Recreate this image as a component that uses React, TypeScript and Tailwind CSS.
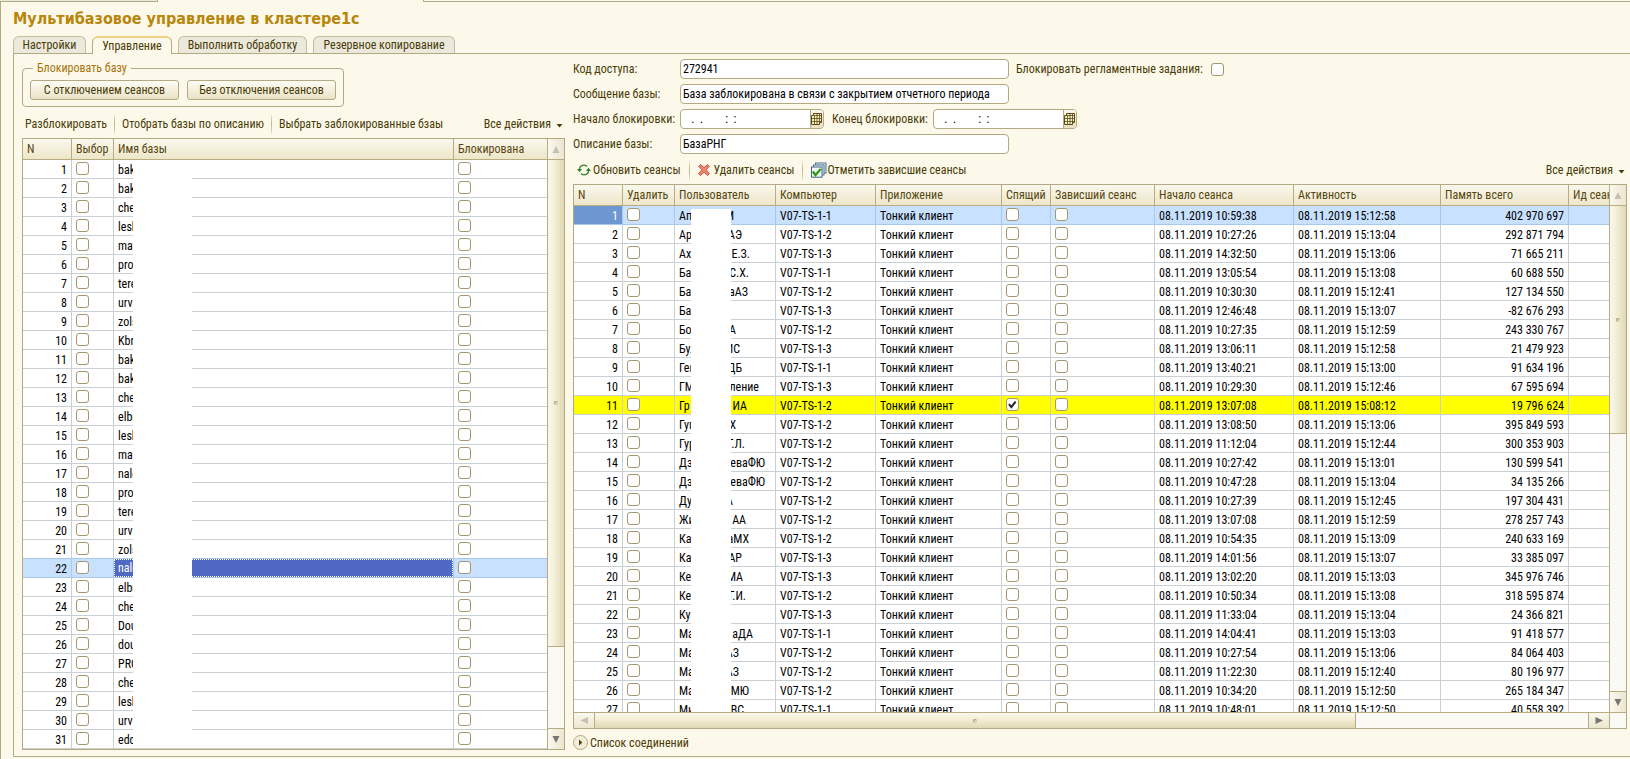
import type { ReactNode } from "react";

type CheckProps = { label: string; checked?: boolean; id?: string };

function Check({ label, checked = false, id }: CheckProps) {
  return (
    <span className="relative block size-[13px]">
      <input
        id={id}
        type="checkbox"
        aria-label={id ? undefined : label}
        defaultChecked={checked}
        className="peer block size-[13px] appearance-none rounded-[3px] border border-[#a3976f] bg-white"
      />
      <svg
        viewBox="0 0 13 13"
        className="pointer-events-none absolute inset-0 hidden size-[13px] peer-checked:block"
        aria-hidden="true"
      >
        <path d="M3 6.2 L5.3 9.2 L9.6 3.6" fill="none" stroke="#222" strokeWidth="2" />
      </svg>
    </span>
  );
}

const databases = [
  "bak", "bak", "che", "lesk", "may", "prob", "tere", "urv", "zols", "Kbr",
  "bak", "bak", "che", "elbr", "lesk", "may", "nalc", "prob", "tere", "urv",
  "zols", "nalc", "elbr", "che", "Dou", "dou", "PRO", "che", "lesk", "urv", "edc",
];

type Session = {
  head: string;
  tail: string;
  end: number;
  pc: number;
  start: string;
  active: string;
  memory: string;
};

const s = (
  head: string, tail: string, end: number, pc: number, start: string, active: string, memory: string,
): Session => ({ head, tail, end, pc, start, active, memory });

const sessions: Session[] = [
  s("Апп", "М", 55, 1, "10:59:38", "15:12:58", "402 970 697"),
  s("Ар", "АЭ", 63, 2, "10:27:26", "15:13:04", "292 871 794"),
  s("Ахм", "Е.З.", 71, 3, "14:32:50", "15:13:06", "71 665 211"),
  s("Ба", "С.Х.", 70, 1, "13:05:54", "15:13:08", "60 688 550"),
  s("Ба", "аАЗ", 69, 2, "10:30:30", "15:12:41", "127 134 550"),
  s("Ба", "", 50, 3, "12:46:48", "15:13:07", "-82 676 293"),
  s("Бо", "А", 57, 2, "10:27:35", "15:12:59", "243 330 767"),
  s("Бул", "ИС", 61, 3, "13:06:11", "15:12:58", "21 479 923"),
  s("Ген", "ДБ", 63, 1, "13:40:21", "15:13:00", "91 634 196"),
  s("ГМ", "ление", 80, 3, "10:29:30", "15:12:46", "67 595 694"),
  s("Гр", "ИА", 68, 2, "13:07:08", "15:08:12", "19 796 624"),
  s("Гуп", "Х", 57, 2, "13:08:50", "15:13:06", "395 849 593"),
  s("Гур", "Г.Л.", 66, 2, "11:12:04", "15:12:44", "300 353 903"),
  s("Дзе", "еваФЮ", 86, 2, "10:27:42", "15:13:01", "130 599 541"),
  s("Дзе", "еваФЮ", 86, 2, "10:47:28", "15:13:04", "34 135 266"),
  s("Ду", "А", 54, 2, "10:27:39", "15:12:45", "197 304 431"),
  s("Жи", "АА", 67, 2, "13:07:08", "15:12:59", "278 257 743"),
  s("Ка", "аМХ", 70, 2, "10:54:35", "15:13:09", "240 633 169"),
  s("Ка", "АР", 63, 3, "14:01:56", "15:13:07", "33 385 097"),
  s("Ке", "МА", 64, 3, "13:02:20", "15:13:03", "345 976 746"),
  s("Ке", "Г.И.", 67, 2, "10:50:34", "15:13:08", "318 595 874"),
  s("Куш", "", 50, 3, "11:33:04", "15:13:04", "24 366 821"),
  s("Ма", "аДА", 74, 1, "14:04:41", "15:13:03", "91 418 577"),
  s("Ма", "АЗ", 60, 2, "10:27:54", "15:13:06", "84 064 403"),
  s("Ма", "АЗ", 60, 2, "11:22:30", "15:12:40", "80 196 977"),
  s("Ма", "МЮ", 70, 2, "10:34:20", "15:12:50", "265 184 347"),
  s("Ми", "ВС", 65, 1, "10:48:01", "15:12:50", "40 558 392"),
];

function Th({ children }: { children: ReactNode }) {
  return (
    <th
      scope="col"
      className="h-[21px] overflow-hidden border-r border-b border-[#b8ad82] bg-linear-to-b from-[#faf8ee] to-[#ede6c9] px-1 text-left font-normal whitespace-nowrap text-[#57460f] last:border-r-0"
    >
      {children}
    </th>
  );
}

const baseCell = "h-[19px] overflow-hidden border-r border-b px-1 whitespace-nowrap last:border-r-0";
const cell = `${baseCell} pt-[2px] leading-[16px]`;
const checkCell = `${baseCell} pt-[2px] align-top`;

function Tri({ dir, dim = false }: { dir: "up" | "down" | "left" | "right"; dim?: boolean }) {
  const d = {
    up: "M4 1 L7.5 8 H0.5 Z",
    down: "M4 8 L7.5 1 H0.5 Z",
    left: "M0.5 4.5 L8 1 V8 Z",
    right: "M8 4.5 L0.5 1 V8 Z",
  }[dir];
  return (
    <svg viewBox="0 0 9 9" className="size-[9px]" aria-hidden="true">
      <path d={d} fill={dim ? "#c4c1b4" : "#77756f"} />
    </svg>
  );
}

const grip = <span className="block size-[4px] rounded-full border-t border-l border-[#aba684] bg-[#d9d3b4]" />;

function VScroll({ thumb, foot }: { thumb: string; foot: string }) {
  return (
    <div className="flex w-[17px] shrink-0 flex-col border-l border-[#b8ad82] bg-[#faf9f4]">
      <button
        type="button"
        aria-label="Вверх"
        className="flex h-[21px] shrink-0 items-center justify-center border-b border-[#b8ad82] bg-linear-to-r from-[#faf8ee] to-[#ece6cf]"
      >
        <Tri dir="up" dim />
      </button>
      <div className={`flex items-center justify-center border-b border-[#b8ad82] bg-linear-to-r from-[#faf8ee] via-[#f1ecd0] to-[#e0d8b4] ${thumb}`}>
        {grip}
      </div>
      <div className="grow" />
      <button
        type="button"
        aria-label="Вниз"
        className={`flex shrink-0 items-center justify-center border-t border-[#b8ad82] bg-linear-to-r from-[#faf8ee] to-[#ece6cf] ${foot}`}
      >
        <Tri dir="down" />
      </button>
    </div>
  );
}

function Sep() {
  return <span className="h-[19px] w-px shrink-0 bg-linear-to-b from-[#e8e2c8] via-[#bdb48d] to-[#e8e2c8]" />;
}

function AllActions() {
  return (
    <button type="button" className="ml-auto flex items-center gap-[5px]">
      Все действия
      <svg viewBox="0 0 7 4" className="mt-[3px] h-[4px] w-[7px]" aria-hidden="true">
        <path d="M0.5 0 H6.5 L3.5 3.5 Z" fill="#4a3b08" />
      </svg>
    </button>
  );
}

function RefreshIcon() {
  return (
    <svg viewBox="0 0 14 14" className="h-[14px] w-[14px]" aria-hidden="true">
      <path d="M2.4 6.4 C2.6 3.6 5 2.3 7 2.3 C8.2 2.3 9.2 2.7 10 3.4" fill="none" stroke="#4f8f3c" strokeWidth="1.5" />
      <path d="M0 6 H5 L2.5 9.2 Z" fill="#2f7d22" />
      <path d="M11.6 7.6 C11.4 10.4 9 11.7 7 11.7 C5.8 11.7 4.8 11.3 4 10.6" fill="none" stroke="#4f8f3c" strokeWidth="1.5" />
      <path d="M14 8 H9 L11.5 4.8 Z" fill="#2f7d22" />
    </svg>
  );
}

function DeleteIcon() {
  return (
    <svg viewBox="0 0 12 12" className="size-[12px]" aria-hidden="true">
      <path
        d="M0.7 2.2 L2.6 0.6 L6 3.6 L9.6 0.6 L11.3 2.2 L8.2 5.8 L11.4 9.8 L9.4 11.5 L6 8 L2.5 11.5 L0.6 9.8 L3.9 5.8 Z"
        fill="#ee8672"
        stroke="#cf4736"
        strokeWidth="0.9"
      />
    </svg>
  );
}

function MarkIcon() {
  return (
    <svg viewBox="0 0 16 16" className="size-[16px]" aria-hidden="true">
      <rect x="4.5" y="1" width="10.5" height="10" fill="#dbe9f2" stroke="#52758f" />
      <rect x="2.5" y="3" width="10.5" height="10" fill="#e6f0f6" stroke="#52758f" />
      <rect x="0.5" y="5" width="10.5" height="10.2" fill="#f3f8fb" stroke="#3e6581" />
      <path d="M1.8 9.6 L4.4 13 L9.8 7" fill="none" stroke="#2f9a1d" strokeWidth="2.4" />
    </svg>
  );
}

const fieldBox = "h-[20px] rounded-[4px] border border-[#b3a982] bg-white text-black";

function TextField({ id, label, value }: { id: string; label: string; value: string }) {
  return (
    <>
      <label htmlFor={id} className="w-[107px] shrink-0">{label}</label>
      <input id={id} defaultValue={value} className={`${fieldBox} w-[329px] px-[2px]`} />
    </>
  );
}

function DateField({ id }: { id: string }) {
  return (
    <span className={`flex w-[144px] overflow-hidden ${fieldBox}`}>
      <input id={id} defaultValue={"   .  .        :  :"} className="min-w-0 grow px-[2px]" />
      <button
        type="button"
        aria-label="Календарь"
        className="flex w-[16px] items-center justify-center border-l border-[#b3a982] bg-linear-to-b from-[#faf8ee] to-[#e6dfc0]"
      >
        <svg viewBox="0 0 11 12" className="h-[12px] w-[11px]" aria-hidden="true">
          <path d="M2.5 0.5 H10.5 V9.5 H8.5 V11.5 H0.5 V2.5 H2.5 Z" fill="#f6efcd" stroke="#5c4a10" />
          <path d="M0.5 5.5 H10.5 M0.5 8.5 H10.5 M2.5 2.5 H10.5 M3.5 2.5 V11.5 M6 0.5 V11.5 M8.5 0.5 V11.5" stroke="#5c4a10" strokeWidth="0.8" fill="none" />
        </svg>
      </button>
    </span>
  );
}

const tab = "h-[17px] rounded-t-[6px] border border-b-0 border-[#c5bd9e] bg-[#ebe9db] px-[7px] leading-[17px] whitespace-nowrap";

const groupButton =
  "h-[20px] w-[149px] rounded-[3px] border border-[#b3a982] bg-linear-to-b from-[#fdfcf4] to-[#e9e3c6] leading-[18px] text-[#4a3b08]";

export default function App() {
  return (
    <div className="flex min-h-screen flex-col overflow-hidden bg-[#fcf9ea] font-['Roboto_Condensed','Liberation_Sans',sans-serif] text-[12px] leading-[14px] text-[#4a3b08]">
      <div className="flex h-[2px] shrink-0 justify-between">
        <div className="w-[158px] border-r border-b border-[#b3a982] bg-[#ebe9db]" />
        <div className="ml-[265px] grow border-b border-l border-[#b3a982]" />
      </div>
      <main className="flex grow flex-col border-l border-[#b3a982] pb-[2px] pl-3">
        <h1 className="h-[34px] font-['DejaVu_Sans_Condensed','DejaVu_Sans',sans-serif] text-[16px] leading-[33px] font-bold text-[#b8860b]">
          Мультибазовое управление в кластере1с
        </h1>
        <div role="tablist" className="flex shrink-0 items-end gap-[6px]">
          <button type="button" role="tab" aria-selected="false" className={`w-[73px] ${tab}`}>Настройки</button>
          <button
            type="button"
            role="tab"
            aria-selected="true"
            className="relative z-10 -mb-px h-[18px] w-[80px] rounded-t-[6px] border border-t-2 border-b-0 border-[#b3a982] border-t-[#f0cf86] bg-[#fcf9ea] leading-[16px]"
          >
            Управление
          </button>
          <button type="button" role="tab" aria-selected="false" className={`w-[129px] ${tab}`}>Выполнить обработку</button>
          <button type="button" role="tab" aria-selected="false" className={`w-[142px] ${tab}`}>Резервное копирование</button>
        </div>

        <div className="grid grow grid-cols-[543px_minmax(0,1fr)] gap-2 border border-r-0 border-[#b3a982] pr-[3px] pb-[6px] pl-2">
          <section className="flex flex-col">
            <fieldset className="mt-[7px] flex w-[321px] gap-2 rounded-[4px] border border-[#b3a982] px-[7px] pt-[5px] pb-[6px]">
              <legend className="ml-[3px] px-1 text-[#a8720c]">Блокировать базу</legend>
              <button type="button" className={groupButton}>С отключением сеансов</button>
              <button type="button" className={groupButton}>Без отключения сеансов</button>
            </fieldset>
            <div className="flex h-[31px] items-center gap-[7px] pt-[3px] pr-[2px] pl-[3px]">
              <button type="button">Разблокировать</button>
              <Sep />
              <button type="button">Отобрать базы по описанию</button>
              <Sep />
              <button type="button">Выбрать заблокированные бзаы</button>
              <AllActions />
            </div>
            <div className="flex border border-[#b3a982] bg-white">
              <div className="relative min-w-0 grow">
                <table className="w-full table-fixed border-separate border-spacing-0">
                  <colgroup>
                    <col className="w-[49px]" />
                    <col className="w-[42px]" />
                    <col />
                    <col className="w-[93px]" />
                  </colgroup>
                  <thead>
                    <tr>
                      <Th>N</Th>
                      <Th>Выбор</Th>
                      <Th>Имя базы</Th>
                      <Th>Блокирована</Th>
                    </tr>
                  </thead>
                  <tbody className="text-black">
                    {databases.map((name, i) => {
                      const on = i === 21;
                      const line = on || i === 20 ? "border-b-[#a9c8ec]" : "border-b-[#c8d0d4]";
                      const tone = `${line} ${on ? "border-r-[#a9c8ec] bg-[#c8e1ff]" : "border-r-[#c8d0d4]"}`;
                      return (
                        <tr key={i}>
                          <td className={`${cell} ${tone} text-right`}>{i + 1}</td>
                          <td className={`${checkCell} ${tone}`}><Check label={`Выбор ${i + 1}`} /></td>
                          {on ? (
                            <td className="h-[19px] border-r border-b border-[#a9c8ec] p-0 leading-[16px] text-white">
                              <div className="border border-dotted border-white bg-[#5069c4] px-[3px]">{name}</div>
                            </td>
                          ) : (
                            <td className={`${cell} ${tone}`}>{name}</td>
                          )}
                          <td className={`${checkCell} ${tone}`}><Check label={`Блокирована ${i + 1}`} /></td>
                        </tr>
                      );
                    })}
                  </tbody>
                </table>
                <div className="absolute top-[21px] bottom-px left-[110px] w-[59px] bg-white" />
              </div>
              <VScroll thumb="h-[487px]" foot="h-[21px]" />
            </div>
          </section>

          <section className="flex min-w-0 flex-col">
            <form className="flex flex-col gap-[5px] pt-[5px]">
              <div className="flex items-center">
                <TextField id="code" label="Код доступа:" value="272941" />
                <label htmlFor="jobs" className="ml-[7px] w-[195px]">Блокировать регламентные задания:</label>
                <Check id="jobs" label="Блокировать регламентные задания" />
              </div>
              <div className="flex items-center">
                <TextField id="message" label="Сообщение базы:" value="База заблокирована в связи с закрытием отчетного периода" />
              </div>
              <div className="flex items-center">
                <label htmlFor="from" className="w-[107px] shrink-0">Начало блокировки:</label>
                <DateField id="from" />
                <label htmlFor="to" className="ml-2 w-[101px] shrink-0">Конец блокировки:</label>
                <DateField id="to" />
              </div>
              <div className="flex items-center">
                <TextField id="about" label="Описание базы:" value="БазаРНГ" />
              </div>
            </form>
            <div className="flex h-[30px] shrink-0 items-center gap-2 pt-[2px] pr-[2px] pl-1">
              <button type="button" className="flex items-center gap-[2px]"><RefreshIcon />Обновить сеансы</button>
              <Sep />
              <button type="button" className="flex items-center gap-1"><DeleteIcon />Удалить сеансы</button>
              <Sep />
              <button type="button" className="flex items-center"><MarkIcon />Отметить зависшие сеансы</button>
              <AllActions />
            </div>
            <div className="flex min-h-0 grow basis-0 flex-col overflow-hidden border border-[#b3a982] bg-white">
              <div className="flex min-h-0 grow basis-0 overflow-hidden">
                <div className="relative min-w-0 grow overflow-hidden">
                  <table className="w-full table-fixed border-separate border-spacing-0">
                    <colgroup>
                      <col className="w-[49px]" />
                      <col className="w-[52px]" />
                      <col className="w-[101px]" />
                      <col className="w-[100px]" />
                      <col className="w-[126px]" />
                      <col className="w-[49px]" />
                      <col className="w-[104px]" />
                      <col className="w-[139px]" />
                      <col className="w-[147px]" />
                      <col className="w-[128px]" />
                      <col />
                    </colgroup>
                    <thead>
                      <tr>
                        <Th>N</Th>
                        <Th>Удалить</Th>
                        <Th>Пользователь</Th>
                        <Th>Компьютер</Th>
                        <Th>Приложение</Th>
                        <Th>Спящий</Th>
                        <Th>Зависший сеанс</Th>
                        <Th>Начало сеанса</Th>
                        <Th>Активность</Th>
                        <Th>Память всего</Th>
                        <Th>Ид сеанса</Th>
                      </tr>
                    </thead>
                    <tbody className="text-black">
                      {sessions.map((row, i) => {
                        const tone =
                          i === 0
                            ? "border-[#a9c8ec] bg-[#c8e1ff]"
                            : i === 10
                              ? "border-[#c8d0d4] bg-[#ffff00]"
                              : "border-[#c8d0d4]";
                        const td = `${cell} ${tone}`;
                        const tick = `${checkCell} ${tone}`;
                        return (
                          <tr key={i}>
                            <td className={i === 0 ? `${cell} border-[#a9c8ec] bg-[#6d97d0] text-right text-white` : `${td} text-right`}>{i + 1}</td>
                            <td className={tick}><Check label={`Удалить ${i + 1}`} /></td>
                            <td className={td}>
                              <div className="flex justify-between" style={{ width: row.end }}>
                                <span>{row.head}</span>
                                <span>{row.tail}</span>
                              </div>
                            </td>
                            <td className={td}>V07-TS-1-{row.pc}</td>
                            <td className={td}>Тонкий клиент</td>
                            <td className={tick}><Check label={`Спящий ${i + 1}`} checked={i === 10} /></td>
                            <td className={tick}><Check label={`Зависший сеанс ${i + 1}`} /></td>
                            <td className={td}>08.11.2019 {row.start}</td>
                            <td className={td}>08.11.2019 {row.active}</td>
                            <td className={`${td} text-right`}>{row.memory}</td>
                            <td className={td} />
                          </tr>
                        );
                      })}
                    </tbody>
                  </table>
                  <div className="absolute top-[24px] bottom-0 left-[117px] w-[40px] bg-white" />
                </div>
                <VScroll thumb="h-[228px]" foot="h-[21px]" />
              </div>
              <div className="flex h-[16px] shrink-0 border-t border-[#b8ad82] bg-[#faf9f4]">
                <button
                  type="button"
                  aria-label="Влево"
                  className="flex w-[21px] items-center justify-center border-r border-[#b8ad82] bg-linear-to-b from-[#faf8ee] to-[#ece6cf]"
                >
                  <Tri dir="left" dim />
                </button>
                <div className="flex w-[761px] items-center justify-center border-r border-[#b8ad82] bg-linear-to-b from-[#faf8ee] via-[#f1ecd0] to-[#e0d8b4]">
                  {grip}
                </div>
                <div className="grow" />
                <button
                  type="button"
                  aria-label="Вправо"
                  className="flex w-[21px] items-center justify-center border-l border-[#b8ad82] bg-linear-to-b from-[#faf8ee] to-[#ece6cf]"
                >
                  <Tri dir="right" />
                </button>
                <div className="w-[17px] border-l border-[#b8ad82]" />
              </div>
            </div>
            <button type="button" className="mt-[6px] flex h-[15px] shrink-0 items-center gap-[2px] self-start">
              <svg viewBox="0 0 15 15" className="size-[15px]" aria-hidden="true">
                <circle cx="7.5" cy="7.5" r="7" fill="#f3eed8" stroke="#b3a982" />
                <path d="M6 4.5 L9.3 7.5 L6 10.5 Z" fill="#4a3b08" />
              </svg>
              Список соединений
            </button>
          </section>
        </div>
      </main>
    </div>
  );
}
